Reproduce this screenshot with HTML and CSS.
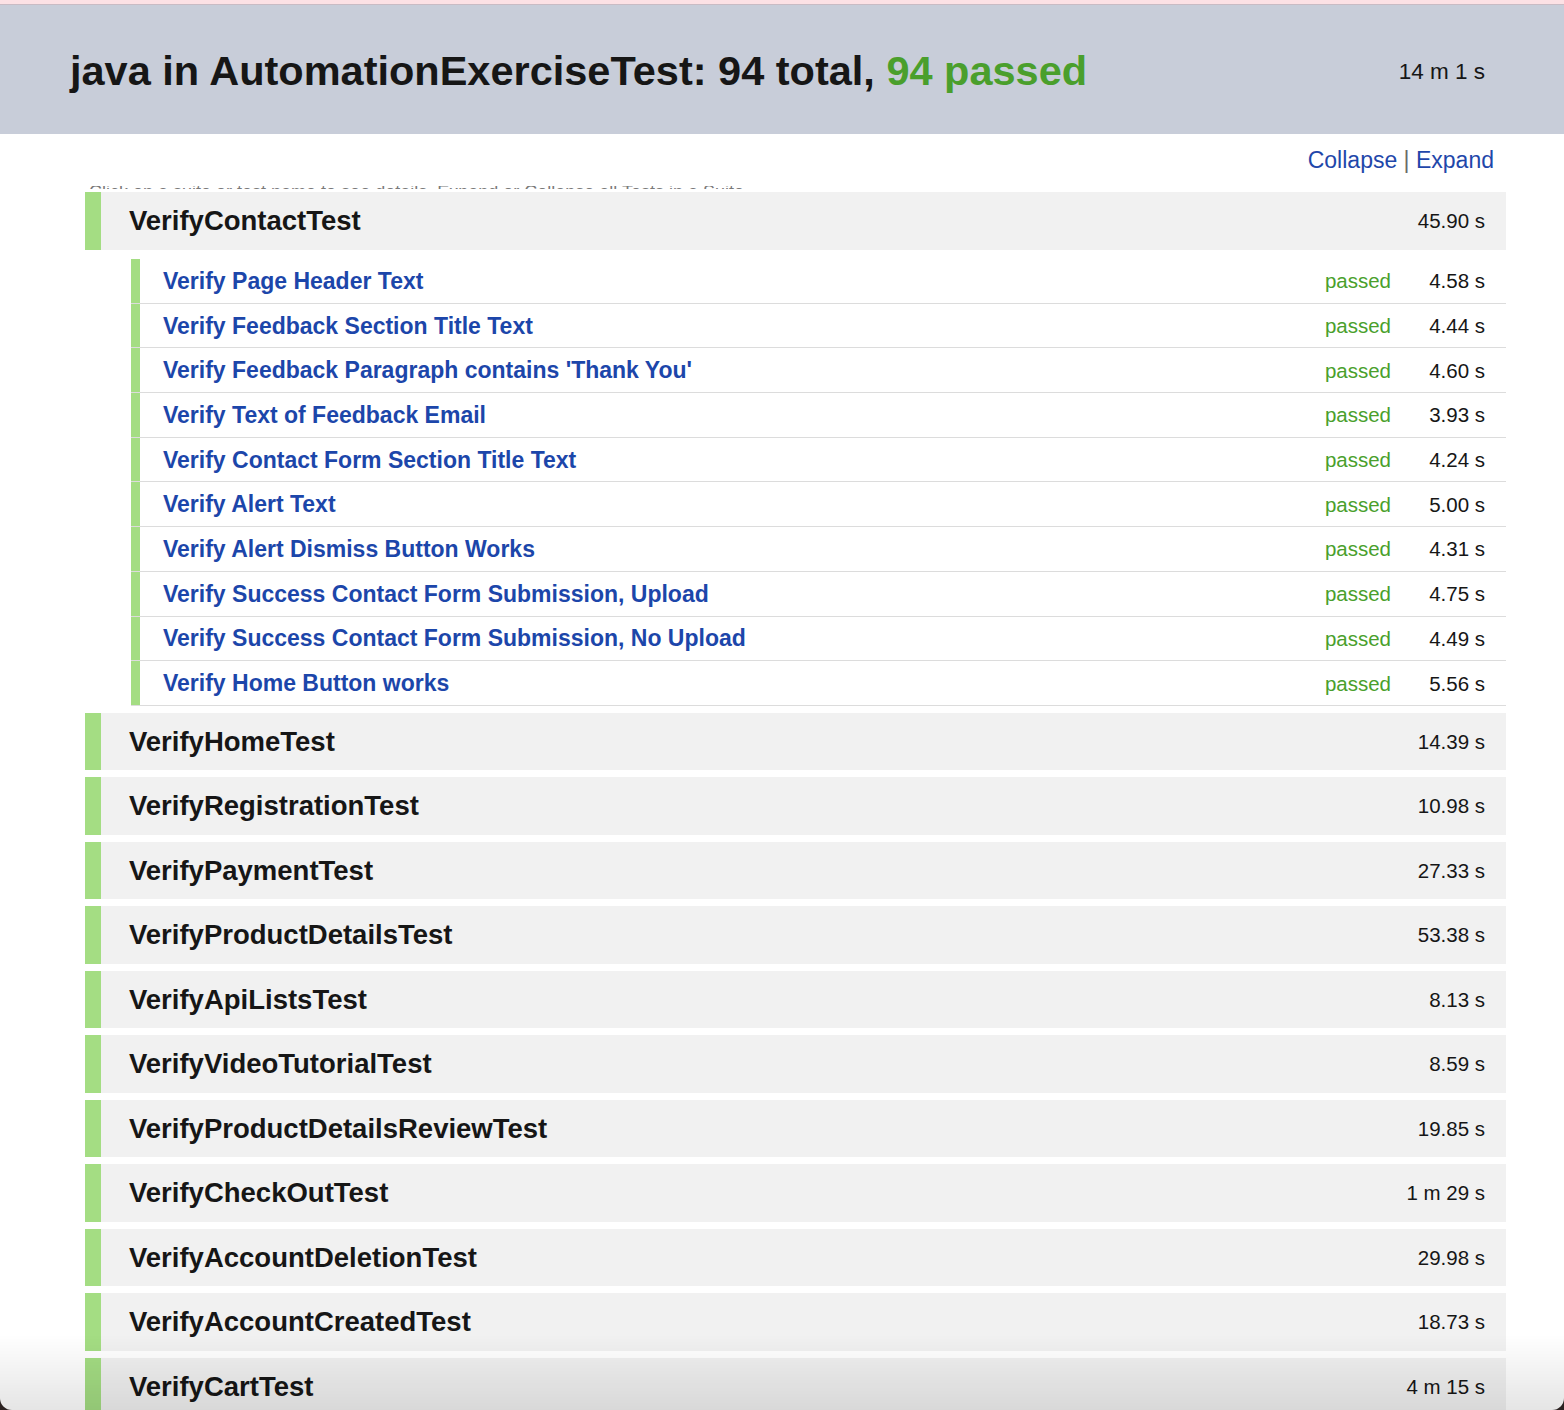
FILE: index.html
```html
<!DOCTYPE html>
<html lang="en">
<head>
<meta charset="utf-8">
<title>java in AutomationExerciseTest</title>
<link rel="stylesheet" href="styles.css">
</head>
<body>
<div class="topstrip"></div>
<header class="summary">
  <h1 class="summary-title">java in AutomationExerciseTest: 94 total, <span class="ok">94 passed</span></h1>
  <span class="summary-time">14 m 1 s</span>
</header>
<main class="report">
  <div class="toolbar"><a class="link" href="#">Collapse</a> <span class="sep">|</span> <a class="link" href="#">Expand</a></div>
  <div class="hint"><span>Click on a suite or test name to see details, Expand or Collapse all Tests in a Suite.</span></div>

  <section class="suite">
    <div class="suite-row"><span class="suite-name">VerifyContactTest</span><span class="suite-time">45.90 s</span></div>
    <ul class="tests">
      <li class="test"><a class="test-name" href="#">Verify Page Header Text</a><span class="status">passed</span><span class="test-time">4.58 s</span></li>
      <li class="test"><a class="test-name" href="#">Verify Feedback Section Title Text</a><span class="status">passed</span><span class="test-time">4.44 s</span></li>
      <li class="test"><a class="test-name" href="#">Verify Feedback Paragraph contains 'Thank You'</a><span class="status">passed</span><span class="test-time">4.60 s</span></li>
      <li class="test"><a class="test-name" href="#">Verify Text of Feedback Email</a><span class="status">passed</span><span class="test-time">3.93 s</span></li>
      <li class="test"><a class="test-name" href="#">Verify Contact Form Section Title Text</a><span class="status">passed</span><span class="test-time">4.24 s</span></li>
      <li class="test"><a class="test-name" href="#">Verify Alert Text</a><span class="status">passed</span><span class="test-time">5.00 s</span></li>
      <li class="test"><a class="test-name" href="#">Verify Alert Dismiss Button Works</a><span class="status">passed</span><span class="test-time">4.31 s</span></li>
      <li class="test"><a class="test-name" href="#">Verify Success Contact Form Submission, Upload</a><span class="status">passed</span><span class="test-time">4.75 s</span></li>
      <li class="test"><a class="test-name" href="#">Verify Success Contact Form Submission, No Upload</a><span class="status">passed</span><span class="test-time">4.49 s</span></li>
      <li class="test"><a class="test-name" href="#">Verify Home Button works</a><span class="status">passed</span><span class="test-time">5.56 s</span></li>
    </ul>
  </section>

  <section class="suite"><div class="suite-row"><span class="suite-name">VerifyHomeTest</span><span class="suite-time">14.39 s</span></div></section>
  <section class="suite"><div class="suite-row"><span class="suite-name">VerifyRegistrationTest</span><span class="suite-time">10.98 s</span></div></section>
  <section class="suite"><div class="suite-row"><span class="suite-name">VerifyPaymentTest</span><span class="suite-time">27.33 s</span></div></section>
  <section class="suite"><div class="suite-row"><span class="suite-name">VerifyProductDetailsTest</span><span class="suite-time">53.38 s</span></div></section>
  <section class="suite"><div class="suite-row"><span class="suite-name">VerifyApiListsTest</span><span class="suite-time">8.13 s</span></div></section>
  <section class="suite"><div class="suite-row"><span class="suite-name">VerifyVideoTutorialTest</span><span class="suite-time">8.59 s</span></div></section>
  <section class="suite"><div class="suite-row"><span class="suite-name">VerifyProductDetailsReviewTest</span><span class="suite-time">19.85 s</span></div></section>
  <section class="suite"><div class="suite-row"><span class="suite-name">VerifyCheckOutTest</span><span class="suite-time">1 m 29 s</span></div></section>
  <section class="suite"><div class="suite-row"><span class="suite-name">VerifyAccountDeletionTest</span><span class="suite-time">29.98 s</span></div></section>
  <section class="suite"><div class="suite-row"><span class="suite-name">VerifyAccountCreatedTest</span><span class="suite-time">18.73 s</span></div></section>
  <section class="suite"><div class="suite-row"><span class="suite-name">VerifyCartTest</span><span class="suite-time">4 m 15 s</span></div></section>
</main>
<div class="window-frame"></div>
</body>
</html>
```
FILE: styles.css
```css
html, body {
  margin: 0;
  padding: 0;
  overflow: hidden;
  background: #ffffff;
}
body {
  font-family: "Liberation Sans", Arial, Helvetica, sans-serif;
  color: #161616;
}

.topstrip {
  height: 4px;
  background: #fce1e5;
  border-bottom: 1px solid #c9bbc4;
}

.summary {
  height: 129px;
  background: #c8cdd9;
  display: flex;
  align-items: center;
  justify-content: space-between;
  padding: 0 79px 0 70px;
}
.summary-title {
  margin: 0;
  font-size: 41.5px;
  font-weight: bold;
  color: #161616;
  padding-top: 2px;
}
.summary-title .ok { color: #4a9f2c; }
.summary-time {
  font-size: 22.5px;
  color: #161616;
  padding-top: 4px;
}

.report {
  padding: 0 58px 0 85px;
}

.toolbar {
  margin-top: 13px;
  text-align: right;
  padding-right: 12px;
  font-size: 23px;
  line-height: 26px;
}
.link {
  color: #1f47aa;
  text-decoration: none;
}
.sep { color: #6a6a6a; }

.hint {
  margin-top: 13px;
  height: 3px;
  margin-bottom: 3px;
  overflow: hidden;
  padding-left: 4px;
}
.hint span {
  display: block;
  margin-top: -4px;
  font-size: 18px;
  line-height: 20px;
  color: #7a7a7a;
  white-space: nowrap;
}

.suite { margin-bottom: 7px; }

.suite-row {
  height: 57.5px;
  background: #f1f1f1;
  border-left: 16px solid #a4dd83;
  display: flex;
  align-items: center;
  justify-content: space-between;
  padding: 0 21px 0 28px;
}
.suite-name {
  font-size: 27.5px;
  font-weight: bold;
  color: #161616;
}
.suite-time {
  font-size: 20.5px;
  color: #161616;
}

.tests {
  list-style: none;
  margin: 9.5px 0 0 46px;
  padding: 0;
}
.test {
  height: 43.7px;
  border-bottom: 1px solid #dcdcdc;
  display: flex;
  align-items: center;
  padding-right: 21px;
}
.test::before {
  content: "";
  align-self: stretch;
  width: 9px;
  background: #a4dd83;
  margin-right: 23px;
}
.test-name {
  flex: 1;
  font-size: 23px;
  font-weight: bold;
  color: #1c46aa;
  text-decoration: none;
  padding-top: 1px;
}
.status {
  font-size: 20.5px;
  color: #4a9f2c;
  padding-top: 1px;
}
.test-time {
  width: 94px;
  text-align: right;
  font-size: 20.5px;
  color: #161616;
  padding-top: 1px;
}

.window-frame {
  position: fixed;
  inset: 0;
  pointer-events: none;
  border-radius: 0 0 12px 12px;
  box-shadow: 0 0 0 40px #2b2221;
  background: linear-gradient(to bottom, rgba(0,0,0,0) calc(100% - 75px), rgba(0,0,0,0.1) 100%);
}
```
